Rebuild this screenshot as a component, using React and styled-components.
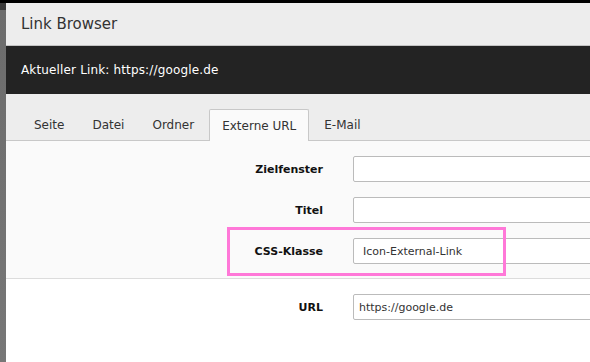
import styled, { createGlobalStyle } from "styled-components";

const GlobalStyle = createGlobalStyle`
    html, body {
        margin: 0;
        padding: 0;
        width: 590px;
        height: 362px;
        overflow: hidden;
        background: #000;
        font-family: "DejaVu Sans", Verdana, sans-serif;
    }
`;

const Screen = styled.div`
    display: flex;
    height: 359px;
    margin-top: 3px;
`;

const Backdrop = styled.div`
    width: 6px;
    flex-shrink: 0;
    background: linear-gradient(to bottom, #3a3a3a 0, #3a3a3a 7px, #6c6c6c 7px, #777 100%);
`;

const Modal = styled.div`
    flex: 1;
    min-width: 0;
    display: flex;
    flex-direction: column;
    background: #fff;
    overflow: hidden;
`;

const Header = styled.div`
    height: 42px;
    display: flex;
    align-items: center;
    padding: 0 15px;
    background: #ededed;
    border-bottom: 1px solid #c3c3c3;
    font-size: 15px;
    color: #333;
`;

const CurrentLink = styled.div`
    height: 48px;
    display: flex;
    align-items: center;
    padding: 0 15px;
    background: #232323;
    color: #fff;
    font-size: 12px;
    letter-spacing: 0.15px;
`;

const TabBar = styled.div`
    display: flex;
    align-items: flex-end;
    gap: 2px;
    height: 47px;
    padding: 0 15px;
    background: #ededed;
    border-bottom: 1px solid #c8c8c8;
    box-sizing: border-box;
`;

const Tab = styled.div`
    display: flex;
    align-items: center;
    padding: 0 12px;
    box-sizing: border-box;
    font-size: 12px;
    color: #333;
    border: 1px solid ${(p) => (p.$active ? "#c8c8c8" : "transparent")};
    border-bottom: none;
    border-radius: 2px 2px 0 0;
    background: ${(p) => (p.$active ? "#fafafa" : "transparent")};
    margin-bottom: ${(p) => (p.$active ? "-1px" : "0")};
    height: ${(p) => (p.$active ? "32px" : "31px")};
`;

const Section = styled.div`
    display: flex;
    flex-direction: column;
    gap: 15px;
    padding: ${(p) => (p.$plain ? "15px 0" : "15px 0 14px")};
    background: ${(p) => (p.$plain ? "#fff" : "#fafafa")};
    border-bottom: ${(p) => (p.$plain ? "none" : "1px solid #dcdcdc")};
`;

const Row = styled.div`
    position: relative;
    display: grid;
    grid-template-columns: 317px 400px;
    column-gap: 30px;
    align-items: center;
`;

const Label = styled.label`
    text-align: right;
    font-size: 11px;
    font-weight: bold;
    color: #111;
`;

const Input = styled.div`
    height: 26px;
    display: flex;
    align-items: center;
    padding: 0 ${(p) => (p.$indent ? "9px" : "5px")};
    box-sizing: border-box;
    background: #fff;
    border: 1px solid #bbb;
    border-radius: 2px;
    font-size: 11px;
    color: #333;
`;

const Highlight = styled.div`
    position: absolute;
    left: 221px;
    top: -11px;
    width: 279px;
    height: 49px;
    box-sizing: border-box;
    border: 3px solid #ff78d8;
    pointer-events: none;
`;

const tabs = ["Seite", "Datei", "Ordner", "Externe URL", "E-Mail"];

const App = () => {
    return (
        <>
            <GlobalStyle />
            <Screen>
                <Backdrop />
                <Modal>
                    <Header>Link Browser</Header>
                    <CurrentLink>Aktueller Link: https://google.de</CurrentLink>
                    <TabBar>
                        {tabs.map((t) => (
                            <Tab key={t} $active={t === "Externe URL"}>{t}</Tab>
                        ))}
                    </TabBar>
                    <Section>
                        <Row>
                            <Label>Zielfenster</Label>
                            <Input />
                        </Row>
                        <Row>
                            <Label>Titel</Label>
                            <Input />
                        </Row>
                        <Row>
                            <Highlight />
                            <Label>CSS-Klasse</Label>
                            <Input $indent>Icon-External-Link</Input>
                        </Row>
                    </Section>
                    <Section $plain>
                        <Row>
                            <Label>URL</Label>
                            <Input>https://google.de</Input>
                        </Row>
                    </Section>
                </Modal>
            </Screen>
        </>
    );
};

export default App;
